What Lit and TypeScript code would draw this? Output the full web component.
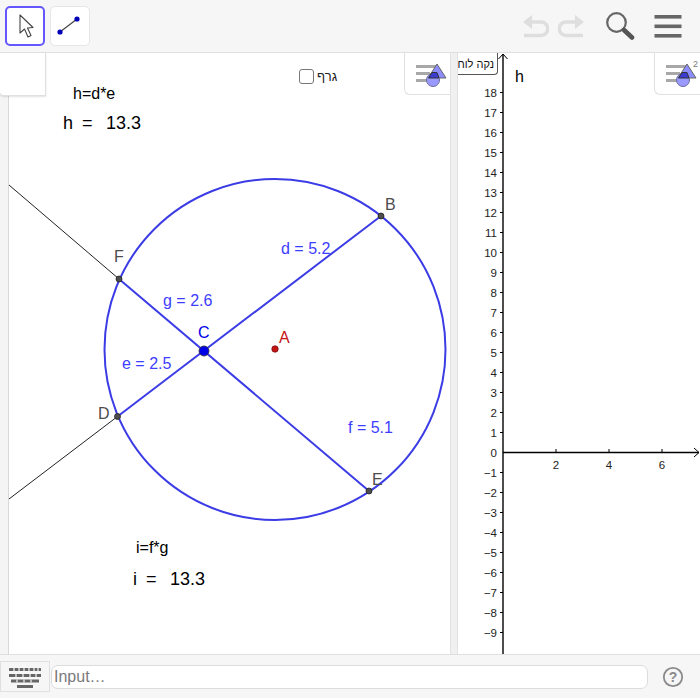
import { LitElement, css, html, svg } from 'lit'
import { customElement } from 'lit/decorators.js'

const styleBarIcon = (exponent: boolean) => html`
  <svg width="40" height="32" viewBox="0 0 40 32">
    <g fill="#a8a8a8">
      <rect x="8" y="7" width="20" height="3"></rect>
      <rect x="8" y="14" width="14" height="3"></rect>
      <rect x="8" y="21" width="12" height="3"></rect>
    </g>
    <path d="M20 20 L29 6 L38 20 Z" fill="#8d8dff" stroke="#666" stroke-width="1"></path>
    <circle cx="25" cy="22" r="6.5" fill="#9999ff" stroke="#6a6a9a" stroke-width="1"></circle>
    <path d="M20.5 20 L24 14.5 L29 14.5 L31 20 Z" fill="#3b3bd0" stroke="#333"></path>
    ${exponent ? svg`<text x="35" y="9" class="exp">2</text>` : ''}
  </svg>
`

@customElement('app-root')
export class AppRoot extends LitElement {
  static styles = css`
    :host {
      display: block;
      width: 700px;
      height: 700px;
      font-family: 'Liberation Sans', Arial, sans-serif;
      background: #fff;
      overflow: hidden;
    }

    .app {
      display: flex;
      flex-direction: column;
      height: 698px;
    }

    .toolbar {
      flex: 0 0 52px;
      display: flex;
      align-items: center;
      padding: 0 18px 0 5px;
      gap: 5px;
      background: #f6f6f6;
      border-bottom: 1px solid #e0e0e0;
    }

    .tool {
      box-sizing: border-box;
      width: 40px;
      height: 40px;
      display: flex;
      align-items: center;
      justify-content: center;
      background: #fff;
      border: 1px solid #e6e6e6;
      border-radius: 5px;
    }

    .tool.active {
      border: 2px solid #6557ff;
    }

    .actions {
      margin-left: auto;
      display: flex;
      align-items: center;
      gap: 9px;
    }

    .actions .search {
      margin: 0 10px 0 10px;
    }

    .main {
      flex: 1;
      display: flex;
      min-height: 0;
    }

    .strip {
      position: relative;
      flex: 0 0 8px;
      background: #f4f4f4;
      border-right: 1px solid #d8d8d8;
    }

    .graphics {
      position: relative;
      overflow: hidden;
      background: #fff;
    }

    .graphics.left {
      flex: 0 0 441px;
    }

    .graphics.right {
      flex: 1;
    }

    .graphics > svg.canvas {
      display: block;
    }

    .splitter {
      flex: 0 0 8px;
      background: #f0f0f0;
      border-left: 1px solid #e2e2e2;
      border-right: 1px solid #e2e2e2;
      box-sizing: border-box;
    }

    .corner {
      position: absolute;
      z-index: 2;
      left: 0;
      top: 0;
      width: 45px;
      height: 42px;
      background: #fff;
      border-right: 1px solid #e0e0e0;
      border-bottom: 1px solid #e0e0e0;
      border-bottom-left-radius: 4px;
      box-shadow: 0 1px 2px rgba(0, 0, 0, 0.12);
    }

    .style-bar {
      position: absolute;
      top: 0;
      right: 0;
      width: 46px;
      height: 42px;
      display: flex;
      align-items: center;
      justify-content: center;
      background: #fff;
      border-left: 1px solid #e0e0e0;
      border-bottom: 1px solid #e0e0e0;
      border-bottom-left-radius: 6px;
      box-sizing: border-box;
    }

    .check {
      position: absolute;
      left: 290px;
      top: 16px;
      display: flex;
      align-items: center;
      gap: 3px;
      font-size: 13px;
      color: #222;
    }

    .check span {
      box-sizing: border-box;
      width: 15px;
      height: 15px;
      border: 1.5px solid #777;
      border-radius: 3px;
    }

    .clear {
      position: absolute;
      left: -12px;
      top: 0;
      width: 52px;
      height: 22px;
      box-sizing: border-box;
      display: flex;
      align-items: center;
      justify-content: flex-end;
      padding-right: 3px;
      font-size: 11px;
      color: #111;
      background: #fff;
      border: 1px solid #555;
      border-top: 0;
      border-radius: 0 0 4px 4px;
      white-space: nowrap;
      overflow: hidden;
    }

    .bottom {
      flex: 0 0 43px;
      display: flex;
      align-items: center;
      background: #f6f6f6;
      border-top: 1px solid #e0e0e0;
    }

    .keyboard {
      box-sizing: border-box;
      width: 50px;
      height: 31px;
      display: flex;
      align-items: center;
      justify-content: center;
      background: #f6f6f6;
      border: 1px solid #e0e0e0;
    }

    .input {
      box-sizing: border-box;
      width: 597px;
      height: 24px;
      margin-left: 1px;
      padding-left: 2px;
      display: flex;
      align-items: center;
      font-size: 16px;
      color: #7a7a7a;
      background: #fff;
      border: 1px solid #dcdcdc;
      border-radius: 7px;
    }

    .help {
      margin-left: 14px;
      display: flex;
    }

    text {
      font-family: 'Liberation Sans', Arial, sans-serif;
    }

    .exp {
      font-size: 9px;
      fill: #777;
    }

    .seg-label {
      font-size: 16px;
      fill: #3d3dff;
    }

    .pt-label {
      font-size: 16px;
      fill: #4d4d4d;
    }

    .formula {
      font-size: 16px;
      fill: #000;
    }

    .value {
      font-size: 18px;
      fill: #000;
    }

    .tick {
      font-size: 11.5px;
      fill: #222;
    }
  `

  // tick labels on the y axis of the right graphics view, page y = 452.5 - 20 * n
  private renderGraph() {
    const ys = Array.from({ length: 28 }, (_, i) => 18 - i).filter((n) => n !== 0)
    const xs = [2, 4, 6]
    return svg`
      <line x1="503" y1="54" x2="503" y2="655" stroke="#000" stroke-width="1.4"></line>
      <line x1="503" y1="452.5" x2="699" y2="452.5" stroke="#000" stroke-width="1.4"></line>
      <path d="M498.5 59 L503 54 L507.5 59" fill="none" stroke="#000"></path>
      <path d="M694 448 L699 452.5 L694 457" fill="none" stroke="#000"></path>
      ${ys.map((n) => {
        const y = 452.5 - 20 * n
        return svg`
          <line x1="500" y1=${y} x2="503" y2=${y} stroke="#000"></line>
          <text class="tick" x="497" y=${y + 4} text-anchor="end">${n < 0 ? `\u2212${-n}` : n}</text>
        `
      })}
      <text class="tick" x="497" y="456.5" text-anchor="end">0</text>
      ${xs.map((n) => {
        const x = 503 + 26.5 * n
        return svg`
          <line x1=${x} y1="449" x2=${x} y2="452" stroke="#000"></line>
          <text class="tick" x=${x} y="469" text-anchor="middle">${n}</text>
        `
      })}
      <text class="formula" x="515" y="82">h</text>
    `
  }

  private renderGeometry() {
    const points: [number, number][] = [
      [381, 216],
      [117.5, 416.5],
      [119, 279],
      [369, 491],
    ]
    return svg`
      <line x1="9" y1="185" x2="119" y2="279" stroke="#222" stroke-width="1"></line>
      <line x1="9" y1="499" x2="117.5" y2="416.5" stroke="#222" stroke-width="1"></line>
      <circle cx="275" cy="349.5" r="170.5" fill="none" stroke="#3c3ce6" stroke-width="2"></circle>
      <line x1="117.5" y1="416.5" x2="381" y2="216" stroke="#3c3ce6" stroke-width="2"></line>
      <line x1="119" y1="279" x2="369" y2="491" stroke="#3c3ce6" stroke-width="2"></line>
      ${points.map(
        ([x, y]) => svg`<circle cx=${x} cy=${y} r="3" fill="#4d4d4d" stroke="#222" stroke-width="0.8"></circle>`,
      )}
      <circle cx="204" cy="351" r="5" fill="#0000e6" stroke="#333" stroke-width="0.8"></circle>
      <circle cx="275" cy="349" r="3.2" fill="#c41414" stroke="#7a1010" stroke-width="0.8"></circle>

      <text class="seg-label" x="281" y="254">d = 5.2</text>
      <text class="seg-label" x="163" y="306">g = 2.6</text>
      <text class="seg-label" x="122" y="369">e = 2.5</text>
      <text class="seg-label" x="348" y="433">f = 5.1</text>

      <text class="pt-label" x="385" y="210">B</text>
      <text class="pt-label" x="114" y="262">F</text>
      <text class="pt-label" x="98" y="419">D</text>
      <text class="pt-label" x="372" y="485">E</text>
      <text class="pt-label" x="198" y="338" style="fill:#0000e6">C</text>
      <text class="pt-label" x="279" y="343" style="fill:#c41414">A</text>

      <text class="formula" x="73" y="99">h=d*e</text>
      <text class="value" x="63" y="129" xml:space="preserve">h</text>
      <text class="value" x="82" y="129">=</text>
      <text class="value" x="106" y="129">13.3</text>
      <text class="formula" x="136" y="553">i=f*g</text>
      <text class="value" x="133" y="585">i</text>
      <text class="value" x="146" y="585">=</text>
      <text class="value" x="170" y="585">13.3</text>
    `
  }

  render() {
    return html`
      <div class="app">
        <div class="toolbar">
          <div class="tool active">
            <svg width="24" height="26" viewBox="0 0 24 26">
              <path d="M7 2 L7 20 L11.5 16 L15 24 L18 22.5 L14.5 15 L20 14.5 Z" fill="#fff" stroke="#444" stroke-width="1.1" stroke-linejoin="round"></path>
            </svg>
          </div>
          <div class="tool">
            <svg width="30" height="26" viewBox="0 0 30 26">
              <line x1="5" y1="19" x2="22" y2="6" stroke="#444" stroke-width="1.2"></line>
              <circle cx="5" cy="19" r="2.6" fill="#0000b8"></circle>
              <circle cx="22" cy="6" r="2.6" fill="#0000b8"></circle>
            </svg>
          </div>
          <div class="actions">
            <svg width="28" height="24" viewBox="0 0 28 24">
              <path d="M2 8 L11 1 L11 15 Z" fill="#dedede"></path>
              <path d="M9 8 H20 A6.5 6.5 0 0 1 20 21.5 H3" fill="none" stroke="#dedede" stroke-width="3.4"></path>
            </svg>
            <svg width="28" height="24" viewBox="0 0 28 24">
              <path d="M26 8 L17 1 L17 15 Z" fill="#dedede"></path>
              <path d="M19 8 H8 A6.5 6.5 0 0 0 8 21.5 H25" fill="none" stroke="#dedede" stroke-width="3.4"></path>
            </svg>
            <svg class="search" width="30" height="30" viewBox="0 0 30 30">
              <circle cx="11.5" cy="11.5" r="9.3" fill="none" stroke="#666" stroke-width="2.2"></circle>
              <line x1="19" y1="19" x2="27" y2="26.5" stroke="#555" stroke-width="4.6" stroke-linecap="round"></line>
            </svg>
            <svg width="28" height="26" viewBox="0 0 28 26">
              <g fill="#666">
                <rect x="0.5" y="2" width="27" height="3.6"></rect>
                <rect x="0.5" y="11.5" width="27" height="3.6"></rect>
                <rect x="0.5" y="21" width="27" height="3.6"></rect>
              </g>
            </svg>
          </div>
        </div>

        <div class="main">
          <div class="strip"><div class="corner"></div></div>
          <div class="graphics left">
            <svg class="canvas" width="441" height="602" viewBox="9 53 441 602">${this.renderGeometry()}</svg>
            <div class="check"><span></span><bdi>גרף</bdi></div>
            <div class="style-bar">${styleBarIcon(false)}</div>
          </div>
          <div class="splitter"></div>
          <div class="graphics right">
            <svg class="canvas" width="242" height="602" viewBox="458 53 242 602">${this.renderGraph()}</svg>
            <div class="clear"><bdi>נקה לוח</bdi></div>
            <div class="style-bar">${styleBarIcon(true)}</div>
          </div>
        </div>

        <div class="bottom">
          <div class="keyboard">
            <svg width="34" height="24" viewBox="0 0 34 24">
              <g fill="#666">
                <rect x="1" y="3" width="32" height="3" rx="0.5"></rect>
                <rect x="1" y="9" width="32" height="3"></rect>
                <rect x="3" y="14.500" width="28" height="3"></rect>
                <rect x="9" y="20" width="16" height="3"></rect>
              </g>
              <g stroke="#f6f6f6" stroke-width="1.2">
                <path d="M6 3v3 M11 3v3 M16 3v3 M21 3v3 M26 3v3 M30 3v3"></path>
                <path d="M8 9v3 M15 9v3 M22 9v3 M28 9v3"></path>
                <path d="M9 14.500v3 M16 14.500v3 M23 14.500v3"></path>
              </g>
            </svg>
          </div>
          <div class="input">Input…</div>
          <div class="help">
            <svg width="22" height="22" viewBox="0 0 22 22">
              <circle cx="11" cy="11" r="9.2" fill="none" stroke="#8a8a8a" stroke-width="1.8"></circle>
              <text x="11" y="16" text-anchor="middle" style="font-size:14px;font-weight:bold;fill:#8a8a8a">?</text>
            </svg>
          </div>
        </div>
      </div>
    `
  }
}

declare global {
  interface HTMLElementTagNameMap {
    'app-root': AppRoot
  }
}
